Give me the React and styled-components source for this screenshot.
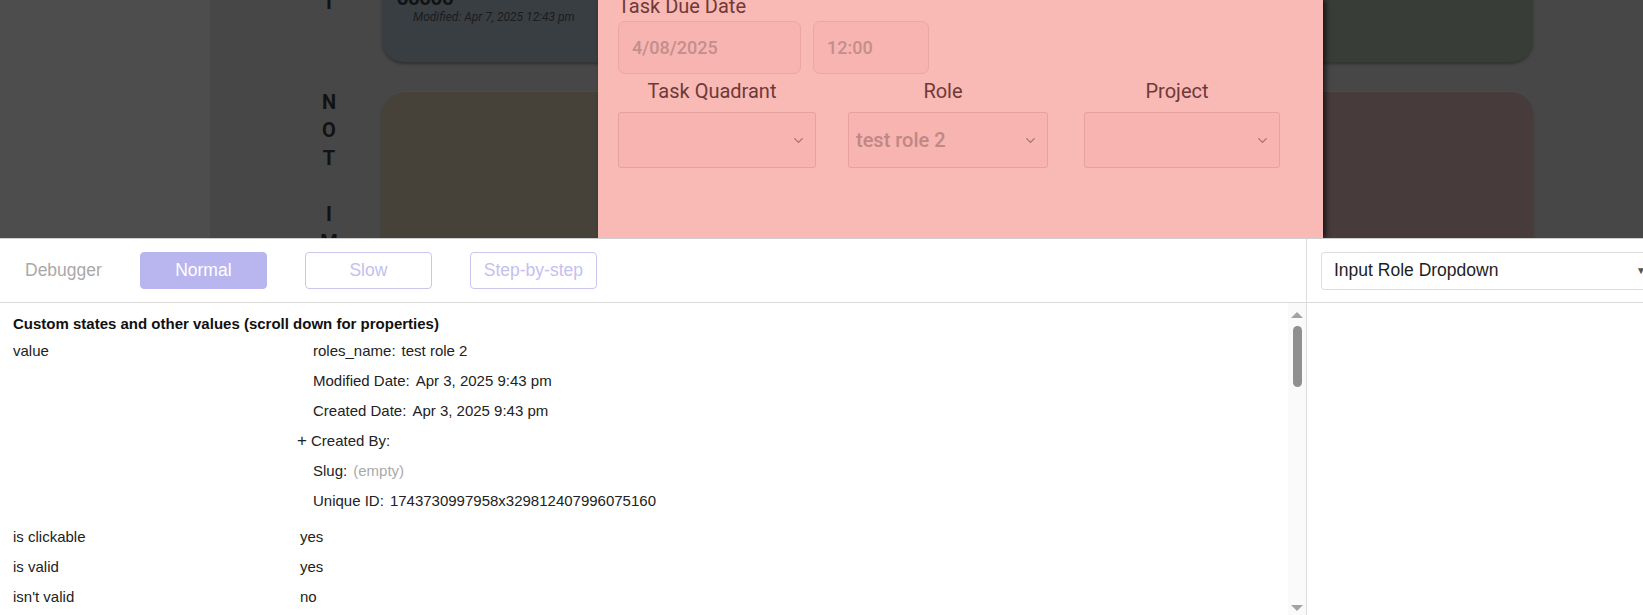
import React from 'react';
import styled, { createGlobalStyle, css } from 'styled-components';
import { ChevronDown } from 'lucide-react';

const GlobalStyle = createGlobalStyle`
  html, body {
    margin: 0;
    padding: 0;
    height: 100%;
    overflow: hidden;
    background: #ffffff;
  }
  * {
    box-sizing: border-box;
  }
`;

const Page = styled.div`
  display: flex;
  flex-direction: column;
  height: 615px;
  width: 1643px;
  overflow: hidden;
`;

/* ---------- dimmed app behind the popup ---------- */

const Stage = styled.div`
  position: relative;
  display: flex;
  height: 239px;
  flex-shrink: 0;
  overflow: hidden;
  border-bottom: 1px solid #cfcfcf;
  font-family: Roboto, 'Liberation Sans', sans-serif;
`;

const Sidebar = styled.div`
  width: 210px;
  flex-shrink: 0;
  background: #4d4d4d;
`;

const Board = styled.div`
  flex: 1;
  align-self: flex-start;
  display: grid;
  grid-template-columns: 58px 1fr 1fr;
  grid-template-rows: 294px 294px;
  column-gap: 24px;
  row-gap: 30px;
  margin-top: -232px;
  padding: 0 110px 0 90px;
  background: #474747;
  min-height: 700px;
`;

const SideLabel = styled.div`
  display: flex;
  flex-direction: column;
  align-items: center;
  margin-top: -4px;
  color: #121212;
  font-size: 20px;
  font-weight: 700;
  line-height: 28px;
`;

const tones = {
  slate: '#393e43',
  moss: '#383d38',
  olive: '#46423a',
  rust: '#473b3b',
};

const Card = styled.div`
  display: flex;
  flex-direction: column;
  justify-content: flex-end;
  padding: 0 0 38px 15px;
  border-radius: 22px;
  background: ${(props) => tones[props.tone]};
  box-shadow: 0 2px 3px rgba(0, 0, 0, 0.35), 0 0 0 1px rgba(255, 255, 255, 0.03);
`;

const CardTitle = styled.div`
  color: #121212;
  font-size: 20px;
  font-weight: 700;
  line-height: 24px;
`;

const CardMeta = styled.div`
  padding-left: 16px;
  color: #1c1c1c;
  font-size: 12px;
  font-style: italic;
  line-height: 14px;
`;

/* ---------- popup ---------- */

const Modal = styled.div`
  position: absolute;
  top: 0;
  left: 598px;
  width: 725px;
  height: 100%;
  padding: 0 39px 0 20px;
  background: #f9b9b5;
  box-shadow: 3px 0 5px rgba(0, 0, 0, 0.6);
`;

const FieldLabel = styled.div`
  color: #6e3a38;
  font-size: 20px;
  line-height: 24px;
  margin-top: ${(props) => props.$top || '0'};
  text-align: ${(props) => (props.$center ? 'center' : 'left')};
  padding-right: ${(props) => (props.$center ? '10px' : '0')};
`;

const DateRow = styled.div`
  display: flex;
  gap: 12px;
  margin-top: 3px;
`;

const TextBox = styled.div`
  display: flex;
  align-items: center;
  width: ${(props) => props.$width}px;
  height: 53px;
  padding-left: 13px;
  border: 1px solid #eba7a3;
  border-radius: 7px;
  background: #f7b4b0;
  color: #c48e8b;
  font-size: 18px;
  font-weight: 500;
`;

const SelectGrid = styled.div`
  display: grid;
  grid-template-columns: 198px 200px 200px;
  column-gap: 32px;
  margin-top: 5px;
  & > div:nth-child(3n) {
    margin-left: 4px;
  }
`;

const SelectCol = styled.div`
  display: flex;
  flex-direction: column;
`;

const SelectBox = styled.div`
  display: flex;
  align-items: center;
  justify-content: space-between;
  height: 56px;
  margin-top: 9px;
  padding: 0 9px 0 7px;
  border: 1px solid #e6a29e;
  border-radius: 3px;
  background: #f7b4b0;
  color: #c08784;
  font-size: 20px;
  font-weight: 500;
  svg {
    color: #a8716e;
  }
`;

/* ---------- debugger ---------- */

const Debugger = styled.div`
  flex: 1;
  display: flex;
  min-height: 0;
  font-family: 'Liberation Sans', Arial, sans-serif;
  color: #222222;
`;

const MainPane = styled.div`
  width: 1307px;
  flex-shrink: 0;
  display: flex;
  flex-direction: column;
  border-right: 1px solid #dddddd;
`;

const SidePane = styled.div`
  flex: 1;
  min-width: 0;
  overflow: hidden;
`;

const Toolbar = styled.div`
  display: flex;
  align-items: center;
  gap: 38px;
  height: 64px;
  flex-shrink: 0;
  padding-left: ${(props) => props.$pad || '25px'};
  border-bottom: 1px solid #d9d9d9;
`;

const ToolLabel = styled.span`
  color: #a9a9a9;
  font-size: 17.5px;
`;

const SpeedButton = styled.button`
  width: 127px;
  height: 37px;
  border-radius: 4px;
  font-family: inherit;
  font-size: 17.5px;
  cursor: pointer;
  ${(props) =>
    props.$active
      ? css`
          border: 1px solid #b9b5ee;
          background: #b9b5ee;
          color: #ffffff;
        `
      : css`
          border: 1px solid #c9c5ec;
          background: #ffffff;
          color: #c4c0ef;
        `}
`;

const ElementSelect = styled.div`
  display: flex;
  align-items: center;
  justify-content: space-between;
  width: 330px;
  height: 38px;
  padding: 0 0 0 12px;
  border: 1px solid #dedede;
  border-radius: 3px;
  color: #1e1e1e;
  font-size: 17.5px;
  flex-shrink: 0;
`;

const Caret = styled.span`
  color: #555;
  font-size: 10px;
  margin-right: 4px;
`;

const Body = styled.div`
  flex: 1;
  display: flex;
  min-height: 0;
`;

const Inspector = styled.div`
  flex: 1;
  padding: 12px 0 0 13px;
  overflow: hidden;
`;

const Heading = styled.div`
  font-size: 15px;
  font-weight: 700;
  line-height: 18px;
  color: #111111;
  margin-bottom: 3px;
`;

const PropRow = styled.div`
  display: grid;
  grid-template-columns: 287px 1fr;
  font-size: 15px;
  line-height: 30px;
  margin-bottom: ${(props) => (props.$nested ? '6px' : '0')};
`;

const EntryList = styled.div`
  display: flex;
  flex-direction: column;
`;

const Entry = styled.div`
  display: flex;
  gap: 6px;
  margin-left: ${(props) => (props.$expandable ? '-3px' : '13px')};
`;

const Plus = styled.span`
  width: 8px;
  font-size: 17px;
`;

const Muted = styled.span`
  color: #aaaaaa;
`;

const Scrollbar = styled.div`
  width: 18px;
  flex-shrink: 0;
  display: flex;
  flex-direction: column;
  align-items: center;
  padding: 9px 0 4px;
  background: #fafafa;
`;

const Arrow = styled.div`
  width: 0;
  height: 0;
  border-left: 6px solid transparent;
  border-right: 6px solid transparent;
  ${(props) =>
    props.$down
      ? css`
          border-top: 6px solid #a3a3a3;
          margin-top: auto;
        `
      : css`
          border-bottom: 6px solid #a3a3a3;
        `}
`;

const Thumb = styled.div`
  width: 9px;
  height: 61px;
  margin-top: 8px;
  border-radius: 5px;
  background: #909090;
`;

const word = (text) =>
  text.split('').map((ch, i) => <span key={i}>{ch === ' ' ? '\u00a0' : ch}</span>);

const entries = [
  ['roles_name:', 'test role 2'],
  ['Modified Date:', 'Apr 3, 2025 9:43 pm'],
  ['Created Date:', 'Apr 3, 2025 9:43 pm'],
  ['Created By:', null, true],
  ['Slug:', <Muted>(empty)</Muted>],
  ['Unique ID:', '1743730997958x329812407996075160'],
];

const App = () => (
  <>
    <GlobalStyle />
    <Page>
      <Stage>
        <Sidebar />
        <Board>
          <SideLabel>{word('IMPORTANT')}</SideLabel>
          <Card tone="slate">
            <CardTitle>ooooo</CardTitle>
            <CardMeta>Modified: Apr 7, 2025 12:43 pm</CardMeta>
          </Card>
          <Card tone="moss" />
          <SideLabel>{word('NOT IMPORTANT')}</SideLabel>
          <Card tone="olive" />
          <Card tone="rust" />
        </Board>
        <Modal>
          <FieldLabel $top="-6px">Task Due Date</FieldLabel>
          <DateRow>
            <TextBox $width={183}>4/08/2025</TextBox>
            <TextBox $width={116}>12:00</TextBox>
          </DateRow>
          <SelectGrid>
            <SelectCol>
              <FieldLabel $center>Task Quadrant</FieldLabel>
              <SelectBox>
                <span />
                <ChevronDown size={15} strokeWidth={2} />
              </SelectBox>
            </SelectCol>
            <SelectCol>
              <FieldLabel $center>Role</FieldLabel>
              <SelectBox>
                <span>test role 2</span>
                <ChevronDown size={15} strokeWidth={2} />
              </SelectBox>
            </SelectCol>
            <SelectCol>
              <FieldLabel $center>Project</FieldLabel>
              <SelectBox>
                <span />
                <ChevronDown size={15} strokeWidth={2} />
              </SelectBox>
            </SelectCol>
          </SelectGrid>
        </Modal>
      </Stage>

      <Debugger>
        <MainPane>
          <Toolbar>
            <ToolLabel>Debugger</ToolLabel>
            <SpeedButton $active>Normal</SpeedButton>
            <SpeedButton>Slow</SpeedButton>
            <SpeedButton>Step-by-step</SpeedButton>
          </Toolbar>
          <Body>
            <Inspector>
              <Heading>Custom states and other values (scroll down for properties)</Heading>
              <PropRow $nested>
                <span>value</span>
                <EntryList>
                  {entries.map(([key, val, expandable]) => (
                    <Entry key={key} $expandable={expandable}>
                      {expandable && <Plus>+</Plus>}
                      <span>{key}</span>
                      {val && <span>{val}</span>}
                    </Entry>
                  ))}
                </EntryList>
              </PropRow>
              <PropRow>
                <span>is clickable</span>
                <span>yes</span>
              </PropRow>
              <PropRow>
                <span>is valid</span>
                <span>yes</span>
              </PropRow>
              <PropRow>
                <span>isn't valid</span>
                <span>no</span>
              </PropRow>
            </Inspector>
            <Scrollbar>
              <Arrow />
              <Thumb />
              <Arrow $down />
            </Scrollbar>
          </Body>
        </MainPane>
        <SidePane>
          <Toolbar $pad="14px">
            <ElementSelect>
              <span>Input Role Dropdown</span>
              <Caret>▼</Caret>
            </ElementSelect>
          </Toolbar>
        </SidePane>
      </Debugger>
    </Page>
  </>
);

export default App;
